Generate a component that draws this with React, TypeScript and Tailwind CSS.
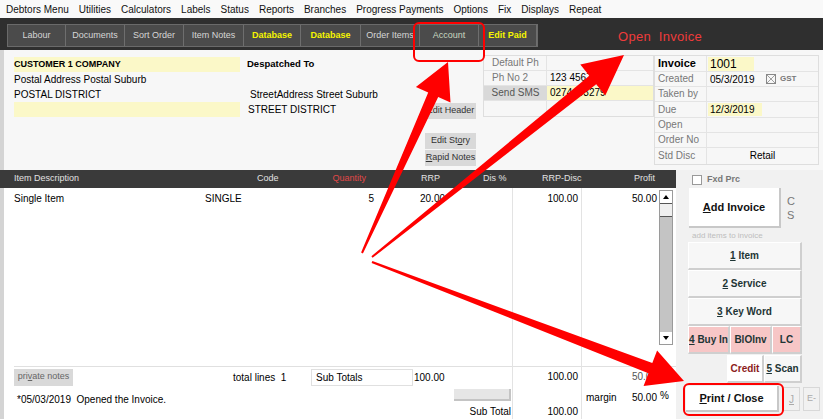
import React from 'react';

const menus = ['Debtors Menu', 'Utilities', 'Calculators', 'Labels', 'Status', 'Reports', 'Branches', 'Progress Payments', 'Options', 'Fix', 'Displays', 'Repeat'];

const tabs = [
  { label: 'Labour', w: 'w-[58px]' },
  { label: 'Documents', w: 'w-[59px]' },
  { label: 'Sort Order', w: 'w-[59px]' },
  { label: 'Item Notes', w: 'w-[60px]' },
  { label: 'Database', w: 'w-[57px]', hi: true },
  { label: 'Database', w: 'w-[60px]', hi: true },
  { label: 'Order Items', w: 'w-[59px]' },
  { label: 'Account', w: 'w-[59px]', green: true },
  { label: 'Edit Paid', w: 'w-[58px]', hi: true },
];

type Pt = [number, number];

function arrowPoints(tail: Pt, tip: Pt, tw: number, sw: number, hw: number, hl: number) {
  const dx = tip[0] - tail[0];
  const dy = tip[1] - tail[1];
  const len = Math.hypot(dx, dy);
  const ux = dx / len;
  const uy = dy / len;
  const nx = -uy;
  const ny = ux;
  const bx = tip[0] - ux * hl;
  const by = tip[1] - uy * hl;
  const p = (x: number, y: number) => `${x.toFixed(1)},${y.toFixed(1)}`;
  return [
    p(tail[0] + (nx * tw) / 2, tail[1] + (ny * tw) / 2),
    p(bx + (nx * sw) / 2, by + (ny * sw) / 2),
    p(bx + (nx * hw) / 2, by + (ny * hw) / 2),
    p(tip[0], tip[1]),
    p(bx - (nx * hw) / 2, by - (ny * hw) / 2),
    p(bx - (nx * sw) / 2, by - (ny * sw) / 2),
    p(tail[0] - (nx * tw) / 2, tail[1] - (ny * tw) / 2),
  ].join(' ');
}

function PanelButton({ children, className = '' }: { children: React.ReactNode; className?: string }) {
  return (
    <div
      className={`flex items-center justify-center border-r-2 border-b-2 border-r-[#cfcfcf] border-b-[#cfcfcf] border-t border-l border-t-white border-l-white text-[10px] font-bold text-[#1e3535] ${className}`}
    >
      {children}
    </div>
  );
}

export default function App() {
  return (
    <div className="relative w-[823px] h-[419px] overflow-hidden bg-[#f7f7f7] font-['Liberation_Sans',Arial,sans-serif] text-[10px] text-black">
      {/* menu bar */}
      <div className="h-[18px] flex items-center pl-[6px] gap-[10px] bg-[#f9f9f9] text-[10px] text-[#111]">
        {menus.map((m) => (
          <span key={m}>{m}</span>
        ))}
      </div>

      {/* toolbar */}
      <div className="h-[32px] bg-[#2f2f2f] flex items-start pt-[6px] pl-[7px]">
        <div className="flex h-[23px] border border-[#6a6a6a]">
          {tabs.map((t, i) => (
            <div
              key={i}
              className={`${t.w} h-full flex items-center justify-center bg-[#4b4b4b] border-r border-[#6e6e6e] text-[9px] ${
                t.hi ? 'text-[#f5f500] font-bold' : t.green ? 'text-[#c8d8c0]' : 'text-[#d6d6d6]'
              }`}
            >
              {t.label}
            </div>
          ))}
        </div>
        <div className="ml-[80px] mt-[3px] text-[13px] tracking-[0.3px] text-[#ee3b3b]">
          Open&nbsp; Invoice
        </div>
      </div>

      {/* header area */}
      <div className="h-[120px] flex border-l-4 border-[#d4d4d4]">
        <div className="w-[10px]" />
        <div className="w-[226px] pt-[7px] flex flex-col text-[10px]">
          <div className="h-[15px] bg-[#fbf8c8] font-bold text-[9px] leading-[14px]">CUSTOMER 1 COMPANY</div>
          <div className="h-[15px] leading-[15px]">Postal Address Postal Suburb</div>
          <div className="h-[15px] leading-[15px]">POSTAL DISTRICT</div>
          <div className="h-[15px] bg-[#fbf8c8]" />
        </div>
        <div className="w-[178px] pl-[7px] pt-[7px] flex flex-col text-[10px]">
          <div className="h-[15px] font-bold text-[9.5px] leading-[14px]">Despatched To</div>
          <div className="h-[15px]" />
          <div className="h-[15px] leading-[15px] pl-[3px]">StreetAddress Street Suburb</div>
          <div className="h-[15px] leading-[15px] pl-[1px]">STREET DISTRICT</div>
        </div>
        <div className="w-[65px] pl-[7px] pt-[53px] flex flex-col text-[9px] text-[#333]">
          <div className="w-[51px] h-[16px] bg-[#d9d9d9] flex items-center justify-center">Edit Header</div>
          <div className="h-[14px]" />
          <div className="w-[51px] h-[16px] bg-[#d9d9d9] flex items-center justify-center">
            Edit St<u>o</u>ry
          </div>
          <div className="w-[51px] h-[16px] mt-[1px] bg-[#d9d9d9] flex items-center justify-center">
            <u>R</u>apid Notes
          </div>
        </div>
        <div className="w-[171px] pt-[5px]">
          <div className="border border-[#dedede] bg-[#f7f7f7] text-[10px]">
            <div className="h-[15px] flex border-b border-[#e4e4e4]">
              <div className="w-[63px] border-r border-[#e4e4e4] pl-[8px] leading-[14px] text-[#777]">Default Ph</div>
              <div className="flex-1" />
            </div>
            <div className="h-[15px] flex border-b border-[#e4e4e4]">
              <div className="w-[63px] border-r border-[#e4e4e4] pl-[8px] leading-[14px] text-[#777]">Ph No 2</div>
              <div className="flex-1 pl-[3px] leading-[14px]">123 4567</div>
            </div>
            <div className="h-[15px] flex border-b border-[#e4e4e4]">
              <div className="w-[63px] bg-[#d9d9d9] text-center leading-[14px] text-[#555]">Send SMS</div>
              <div className="flex-1 bg-[#fbf8c8] pl-[3px] leading-[14px]">0274493279</div>
            </div>
            <div className="h-[15px] flex">
              <div className="w-[63px] border-r border-[#e4e4e4]" />
              <div className="flex-1" />
            </div>
          </div>
        </div>
        <div className="w-[165px] pt-[5px]">
          <div className="border border-[#dedede] bg-[#f7f7f7] text-[10px]">
            <div className="h-[16px] flex border-b border-[#e4e4e4]">
              <div className="w-[52px] border-r border-[#e4e4e4] pl-[3px] leading-[15px] font-bold text-[11px]">Invoice</div>
              <div className="flex-1 pl-[1px] pt-[1px]">
                <div className="w-[46px] h-[14px] bg-[#fbf8c8] pl-[2px] leading-[14px] text-[12px]">1001</div>
              </div>
            </div>
            <div className="h-[15px] flex border-b border-[#e4e4e4]">
              <div className="w-[52px] border-r border-[#e4e4e4] pl-[3px] leading-[14px] text-[#777]">Created</div>
              <div className="flex-1 flex items-center pl-[3px]">
                <span className="w-[56px]">05/3/2019</span>
                <span className="w-[10px] h-[10px] border border-[#888] relative overflow-hidden">
                  <svg viewBox="0 0 10 10" className="w-full h-full">
                    <path d="M0 0L10 10M10 0L0 10" stroke="#888" strokeWidth="1" />
                  </svg>
                </span>
                <span className="ml-[4px] text-[8px] font-bold text-[#777]">GST</span>
              </div>
            </div>
            <div className="h-[15px] flex border-b border-[#e4e4e4]">
              <div className="w-[52px] border-r border-[#e4e4e4] pl-[3px] leading-[14px] text-[#777]">Taken by</div>
              <div className="flex-1" />
            </div>
            <div className="h-[16px] flex border-b border-[#e4e4e4]">
              <div className="w-[52px] border-r border-[#e4e4e4] pl-[3px] leading-[15px] text-[#777]">Due</div>
              <div className="flex-1 pl-[1px] pt-[1px]">
                <div className="w-[54px] h-[13px] bg-[#fbf8c8] pl-[2px] leading-[13px]">12/3/2019</div>
              </div>
            </div>
            <div className="h-[15px] flex border-b border-[#e4e4e4]">
              <div className="w-[52px] border-r border-[#e4e4e4] pl-[3px] leading-[14px] text-[#777]">Open</div>
              <div className="flex-1" />
            </div>
            <div className="h-[15px] flex border-b border-[#e4e4e4]">
              <div className="w-[52px] border-r border-[#e4e4e4] pl-[3px] leading-[14px] text-[#777]">Order No</div>
              <div className="flex-1" />
            </div>
            <div className="h-[16px] flex">
              <div className="w-[52px] border-r border-[#e4e4e4] pl-[3px] leading-[15px] text-[#777]">Std Disc</div>
              <div className="flex-1 text-center leading-[15px]">Retail</div>
            </div>
          </div>
        </div>
      </div>

      {/* lower part */}
      <div className="flex h-[249px]">
        {/* items table */}
        <div className="w-[676px] flex flex-col bg-white border-l-4 border-[#d4d4d4]">
          <div className="h-[18px] bg-[#3a3a3a] flex items-center text-[9px] text-[#e2e2e2] -ml-[4px]">
            <span className="w-[14px]" />
            <span className="w-[243px]">Item Description</span>
            <span className="w-[60px]">Code</span>
            <span className="w-[49px] text-right text-[#e04848]">Quantity</span>
            <span className="w-[55px]" />
            <span className="w-[62px]">RRP</span>
            <span className="w-[59px]">Dis %</span>
            <span className="w-[60px]">RRP-Disc</span>
            <span className="w-[53px] text-right">Profit</span>
          </div>
          <div className="flex-1 flex text-[10px]">
            {/* column A */}
            <div className="w-[509px] flex flex-col border-r border-[#e3e3e3]">
              <div className="flex-1 flex pt-[4px] h-[14px] leading-[14px]">
                <span className="w-[10px]" />
                <span className="w-[191px]">Single Item</span>
                <span className="w-[120px]">SINGLE</span>
                <span className="w-[49px] text-right">5</span>
                <span className="w-[46px]" />
                <span className="w-[60px]">20.00</span>
              </div>
              <div className="h-[21px] ml-[10px] border-t border-[#e0e0e0] flex items-center">
                <div className="w-[59px] h-[17px] bg-[#d9d9d9] text-[9px] text-[#666] flex items-center justify-center">
                  pri<u>v</u>ate notes
                </div>
                <span className="ml-[160px] w-[78px]">total lines&nbsp; 1</span>
                <div className="w-[102px] h-[17px] border border-[#e0e0e0] pl-[4px] leading-[16px]">Sub Totals</div>
                <span className="w-[62px] pl-[1px]">100.00</span>
              </div>
              <div className="h-[32px] flex">
                <div className="flex-1 pl-[13px] pt-[5px]">*05/03/2019&nbsp; Opened the Invoice.</div>
                <div className="w-[60px] flex flex-col items-end pr-[1px] pt-[2px]">
                  <div className="w-[57px] h-[12px] bg-[#e6e6e6] border-r-2 border-b-2 border-[#c4c4c4]" />
                  <span className="mt-[3px]">Sub Total</span>
                </div>
              </div>
            </div>
            {/* column B */}
            <div className="w-[69px] flex flex-col border-r border-[#e3e3e3]">
              <div className="flex-1 pt-[4px] pr-[3px] text-right leading-[14px]">100.00</div>
              <div className="h-[21px] border-t border-[#e0e0e0] pr-[3px] text-right leading-[20px]">100.00</div>
              <div className="h-[32px] pr-[3px] pt-[17px] text-right">100.00</div>
            </div>
            {/* column C */}
            <div className="flex-1 flex flex-col">
              <div className="flex-1 flex">
                <div className="w-[75px] pt-[4px] text-right leading-[14px]">50.00</div>
                <div className="w-[14px] ml-[2px] mt-[2px] h-[155px] border border-[#9a9a9a] bg-[#c4c4c4] flex flex-col">
                  <div className="h-[12px] bg-white flex items-center justify-center">
                    <svg width="6" height="4" viewBox="0 0 6 4"><path d="M3 0L6 4H0Z" fill="#000" /></svg>
                  </div>
                  <div className="h-[14px] bg-[#efefef] border-y border-[#555]" />
                  <div className="flex-1" />
                  <div className="h-[12px] bg-white flex items-center justify-center">
                    <svg width="6" height="4" viewBox="0 0 6 4"><path d="M0 0H6L3 4Z" fill="#000" /></svg>
                  </div>
                </div>
              </div>
              <div className="h-[21px] border-t border-[#e0e0e0] flex">
                <div className="w-[75px] text-right leading-[20px] text-[#555]">50.00</div>
              </div>
              <div className="h-[32px] flex pt-[3px]">
                <span className="ml-[4px] w-[45px]">margin</span>
                <span className="w-[26px] text-right">50.00</span>
                <span className="ml-[3px] -mt-[2px]">%</span>
              </div>
            </div>
          </div>
        </div>

        {/* right panel */}
        <div className="flex-1 bg-[#f1f1f1] flex flex-col pl-[12px]">
          <div className="h-[18px] flex items-center pl-[4px] pt-[1px]">
            <span className="w-[10px] h-[10px] border border-[#999] bg-white" />
            <span className="ml-[5px] text-[9px] font-bold text-[#777]">Fxd Prc</span>
          </div>
          <div className="flex items-start">
            <div className="ml-[1px] w-[92px] h-[40px] bg-white border-r-2 border-b-2 border-[#c8c8c8] flex items-center justify-center text-[11px] font-bold text-[#111]">
              <u>A</u>dd Invoice
            </div>
            <div className="ml-[6px] mt-[6px] text-[11px] leading-[14px] text-[#777]">
              C<br />S
            </div>
          </div>
          <div className="h-[14px] pl-[4px] pt-[3px] text-[8px] text-[#bdbdbd] leading-[9px]">add items to invoice</div>
          <div className="w-[114px] flex flex-col">
            <PanelButton className="h-[28px] bg-[#f7f7f7]"><span><u>1</u> Item</span></PanelButton>
            <PanelButton className="h-[28px] bg-[#f7f7f7]"><span><u>2</u> Service</span></PanelButton>
            <PanelButton className="h-[28px] bg-[#f7f7f7]"><span><u>3</u> Key Word</span></PanelButton>
            <div className="h-[28px] flex">
              <PanelButton className="w-[42px] bg-[#f7c6c6]"><span><u>4</u> Buy In</span></PanelButton>
              <PanelButton className="w-[42px] bg-[#f7c6c6]">BlOInv</PanelButton>
              <PanelButton className="flex-1 bg-[#f7c6c6]">LC</PanelButton>
            </div>
            <div className="h-[29px] flex pt-[1px]">
              <div className="w-[39px]" />
              <PanelButton className="w-[37px] bg-white text-[#8c1c1c]">Credit</PanelButton>
              <PanelButton className="flex-1 bg-[#f7f7f7]"><span><u>5</u> Scan</span></PanelButton>
            </div>
          </div>
          <div className="flex items-center mt-[3px] -ml-[2px]">
            <div className="w-[93px] h-[26px] bg-white border-r-2 border-b-2 border-[#c8c8c8] flex items-center justify-center text-[11px] font-bold text-[#111]">
              <span><u>P</u>rint / Close</span>
            </div>
            <div className="ml-[4px] w-[17px] h-[24px] border border-[#d8d8d8] flex items-center justify-center text-[10px] text-[#aaa]">
              <u>J</u>
            </div>
            <div className="ml-[3px] w-[17px] h-[24px] border border-[#d8d8d8] flex items-center justify-center text-[9px] text-[#aaa]">
              E-
            </div>
          </div>
        </div>
      </div>

      {/* annotations */}
      <svg className="absolute inset-0 pointer-events-none" width="823" height="419" viewBox="0 0 823 419">
        <rect x="414" y="23" width="70" height="38" rx="5" fill="none" stroke="#ff0000" strokeWidth="2" />
        <rect x="684" y="384" width="99" height="31" rx="5" fill="none" stroke="#ff0000" strokeWidth="2" />
        <polygon points={arrowPoints([362, 253], [448, 62], 2, 11, 38, 36)} fill="#ff0000" />
        <polygon points={arrowPoints([372, 257], [624, 55], 2, 11, 40, 40)} fill="#ff0000" />
        <polygon points={arrowPoints([372, 262], [684, 381], 2, 11, 38, 36)} fill="#ff0000" />
      </svg>
    </div>
  );
}
